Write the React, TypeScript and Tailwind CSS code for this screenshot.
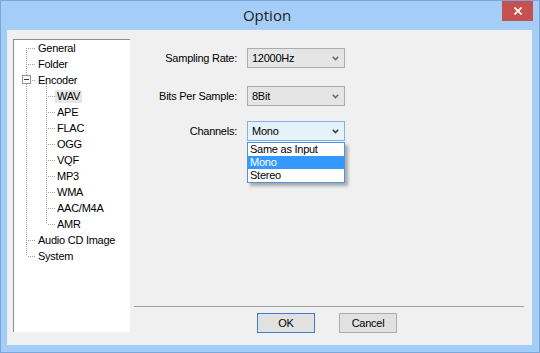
type TreeRow = {
  label: string;
  level: 0 | 1;
  kind: "first" | "mid" | "last" | "expander";
  childLast?: boolean;
  selected?: boolean;
};

const rows: TreeRow[] = [
  { label: "General", level: 0, kind: "first" },
  { label: "Folder", level: 0, kind: "mid" },
  { label: "Encoder", level: 0, kind: "expander" },
  { label: "WAV", level: 1, kind: "mid", selected: true },
  { label: "APE", level: 1, kind: "mid" },
  { label: "FLAC", level: 1, kind: "mid" },
  { label: "OGG", level: 1, kind: "mid" },
  { label: "VQF", level: 1, kind: "mid" },
  { label: "MP3", level: 1, kind: "mid" },
  { label: "WMA", level: 1, kind: "mid" },
  { label: "AAC/M4A", level: 1, kind: "mid" },
  { label: "AMR", level: 1, kind: "mid", childLast: true },
  { label: "Audio CD Image", level: 0, kind: "mid" },
  { label: "System", level: 0, kind: "last" },
];

const dot = { stroke: "#a0a0a0", strokeWidth: 1, strokeDasharray: "1 1", shapeRendering: "crispEdges" as const };

function Connector({ row }: { row: TreeRow }) {
  return (
    <svg width="41" height="16" className="shrink-0">
      {/* root-level vertical */}
      {row.kind === "first" && <line x1="12.5" y1="8" x2="12.5" y2="16" {...dot} />}
      {row.kind === "last" && <line x1="12.5" y1="0" x2="12.5" y2="8" {...dot} />}
      {(row.kind === "mid" || row.kind === "expander") && <line x1="12.5" y1="0" x2="12.5" y2="16" {...dot} />}
      {row.level === 0 && row.kind !== "expander" && <line x1="14" y1="8.5" x2="22" y2="8.5" {...dot} />}
      {row.kind === "expander" && (
        <>
          <rect x="8.5" y="3.5" width="8" height="8" fill="#fff" stroke="#919191" shapeRendering="crispEdges" />
          <line x1="10" y1="7.5" x2="15" y2="7.5" stroke="#1f3b6e" shapeRendering="crispEdges" />
          <line x1="18" y1="8.5" x2="22" y2="8.5" {...dot} />
          <line x1="32.5" y1="12" x2="32.5" y2="16" {...dot} />
        </>
      )}
      {row.level === 1 && (
        <>
          <line x1="32.5" y1="0" x2="32.5" y2={row.childLast ? 8 : 16} {...dot} />
          <line x1="34" y1="8.5" x2="41" y2="8.5" {...dot} />
        </>
      )}
    </svg>
  );
}

function Chevron({ dark }: { dark?: boolean }) {
  return (
    <svg width="7" height="5" className="shrink-0">
      <polyline points="0.8,0.8 3.5,3.6 6.2,0.8" fill="none" stroke={dark ? "#404040" : "#6a6a6a"} strokeWidth="1.6" />
    </svg>
  );
}

function Select({ value, focused, children }: { value: string; focused?: boolean; children?: React.ReactNode }) {
  return (
    <div className="relative ml-[10px]">
      <div
        className={
          focused
            ? "w-[98px] h-[20px] border border-[#7eb4ea] bg-[#e5f1fb] flex items-center pl-[4px] pr-[5px]"
            : "w-[98px] h-[20px] border border-[#acacac] bg-[#e5e5e5] flex items-center pl-[4px] pr-[5px]"
        }
      >
        <span className="flex-1">{value}</span>
        <Chevron dark={focused} />
      </div>
      {children}
    </div>
  );
}

function FormRow({ label, className, children }: { label: string; className: string; children: React.ReactNode }) {
  return (
    <div className={`flex items-center h-[20px] ${className}`}>
      <span className="w-[103px] text-right">{label}</span>
      {children}
    </div>
  );
}

export default function App() {
  return (
    <div className="w-[540px] h-[353px] bg-[#a4cdf7] border border-[#7ba6d8] flex flex-col font-['Liberation_Sans',Arial,sans-serif] text-[11px] tracking-[-0.25px] text-black overflow-hidden">
      {/* title bar */}
      <div className="h-[29px] flex items-start shrink-0">
        <div className="flex-1" />
        <div className="h-[29px] flex items-center text-[15px] tracking-normal text-[#1e1e1e] font-['Open_Sans',sans-serif]">Option</div>
        <div className="flex-1 flex justify-end pr-[6px]">
          <div className="w-[31px] h-[20px] bg-[#c75050] flex items-center justify-center">
            <svg width="8" height="8">
              <line x1="0.5" y1="0.5" x2="7.5" y2="7.5" stroke="#fff" strokeWidth="1.7" />
              <line x1="7.5" y1="0.5" x2="0.5" y2="7.5" stroke="#fff" strokeWidth="1.7" />
            </svg>
          </div>
        </div>
      </div>

      {/* client */}
      <div className="ml-[6px] w-[525px] h-[315px] bg-[#f0f0f0] flex items-start pl-[6px] pt-[9px] gap-[4px]">
        <div className="w-[117px] h-[293px] bg-white border-t border-l border-[#8a8d94]">
          {rows.map((row) => (
            <div key={row.label} className="flex items-center h-[16px]">
              <Connector row={row} />
              {row.level === 0 && <span className="w-0 -ml-[19px]" />}
              <span
                className={
                  row.selected
                    ? "px-[2px] leading-[13px] bg-[#e5e5e5] whitespace-nowrap"
                    : "px-[2px] leading-[13px] whitespace-nowrap"
                }
              >
                {row.label}
              </span>
            </div>
          ))}
        </div>

        <div className="w-[390px] h-[294px] flex flex-col">
          <div className="flex-1">
            <FormRow label="Sampling Rate:" className="mt-[9px]">
              <Select value="12000Hz" />
            </FormRow>
            <FormRow label="Bits Per Sample:" className="mt-[18px]">
              <Select value="8Bit" />
            </FormRow>
            <FormRow label="Channels:" className="mt-[15px]">
              <Select value="Mono" focused>
                <div className="absolute left-0 top-[21px] w-[98px] bg-white border border-[#4a94e0] shadow-[3px_3px_3px_rgba(0,0,0,0.3)] z-10">
                  <div className="h-[13px] leading-[13px] px-[2px]">Same as Input</div>
                  <div className="h-[13px] leading-[13px] px-[2px] bg-[#3399ff] text-white">Mono</div>
                  <div className="h-[13px] leading-[13px] px-[2px]">Stereo</div>
                </div>
              </Select>
            </FormRow>
          </div>
          <div className="h-px bg-[#a0a0a0]" />
          <div className="mt-[6px] flex gap-[24px] pl-[123px]">
            <button type="button" className="w-[58px] h-[20px] bg-[#e1e1e1] border border-[#3c7fd1] flex items-center justify-center">
              OK
            </button>
            <button type="button" className="w-[58px] h-[20px] bg-[#e1e1e1] border border-[#adadad] flex items-center justify-center">
              Cancel
            </button>
          </div>
        </div>
      </div>
    </div>
  );
}
